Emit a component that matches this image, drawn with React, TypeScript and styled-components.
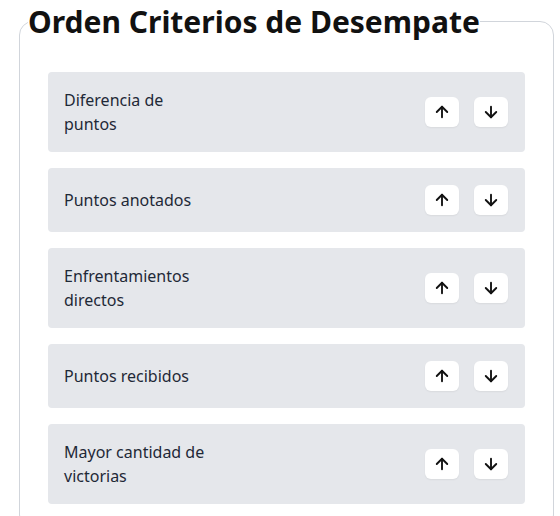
import React from "react";
import styled, { createGlobalStyle } from "styled-components";
import { ArrowUp, ArrowDown } from "lucide-react";

const Global = createGlobalStyle`
  html, body { margin: 0; padding: 0; background: #ffffff; }
  body { font-family: "Noto Sans", "Open Sans", sans-serif; color: #111827; }
`;

const Page = styled.div`
  padding: 1px 6px 0 19px;
`;

const Card = styled.fieldset`
  margin: 0;
  border: 1px solid #d1d5db;
  border-radius: 14px;
  padding: 0 8px;
  min-width: 0;
`;

const Title = styled.legend`
  padding: 0;
  font-size: 30px;
  font-weight: 700;
  color: #111111;
  line-height: normal;
`;

const List = styled.div`
  display: flex;
  flex-direction: column;
  gap: 16px;
  padding: 30px 20px 24px;
`;

const Row = styled.div`
  display: flex;
  align-items: center;
  justify-content: space-between;
  background: #e5e7eb;
  border-radius: 4px;
  padding: 16px 17px 16px 16px;
  min-height: 64px;
  box-sizing: border-box;
`;

const Label = styled.span`
  max-width: 145px;
  font-size: 16px;
  line-height: 24px;
  color: #1f2937;
`;

const Buttons = styled.div`
  display: flex;
  gap: 15px;
`;

const MoveButton = styled.button`
  width: 34px;
  height: 30px;
  display: flex;
  align-items: center;
  justify-content: center;
  background: #ffffff;
  border: none;
  border-radius: 6px;
  box-shadow: 0 1px 2px rgba(0, 0, 0, 0.06);
  padding: 0;
  cursor: pointer;
  color: #111111;
`;

const criteria = [
  "Diferencia de puntos",
  "Puntos anotados",
  "Enfrentamientos directos",
  "Puntos recibidos",
  "Mayor cantidad de victorias",
];

export default function App() {
  return (
    <>
      <Global />
      <Page>
        <Card>
          <Title>Orden Criterios de Desempate</Title>
          <List>
            {criteria.map((c) => (
              <Row key={c}>
                <Label>{c}</Label>
                <Buttons>
                  <MoveButton aria-label="Subir">
                    <ArrowUp size={18} strokeWidth={2.5} />
                  </MoveButton>
                  <MoveButton aria-label="Bajar">
                    <ArrowDown size={18} strokeWidth={2.5} />
                  </MoveButton>
                </Buttons>
              </Row>
            ))}
          </List>
        </Card>
      </Page>
    </>
  );
}
